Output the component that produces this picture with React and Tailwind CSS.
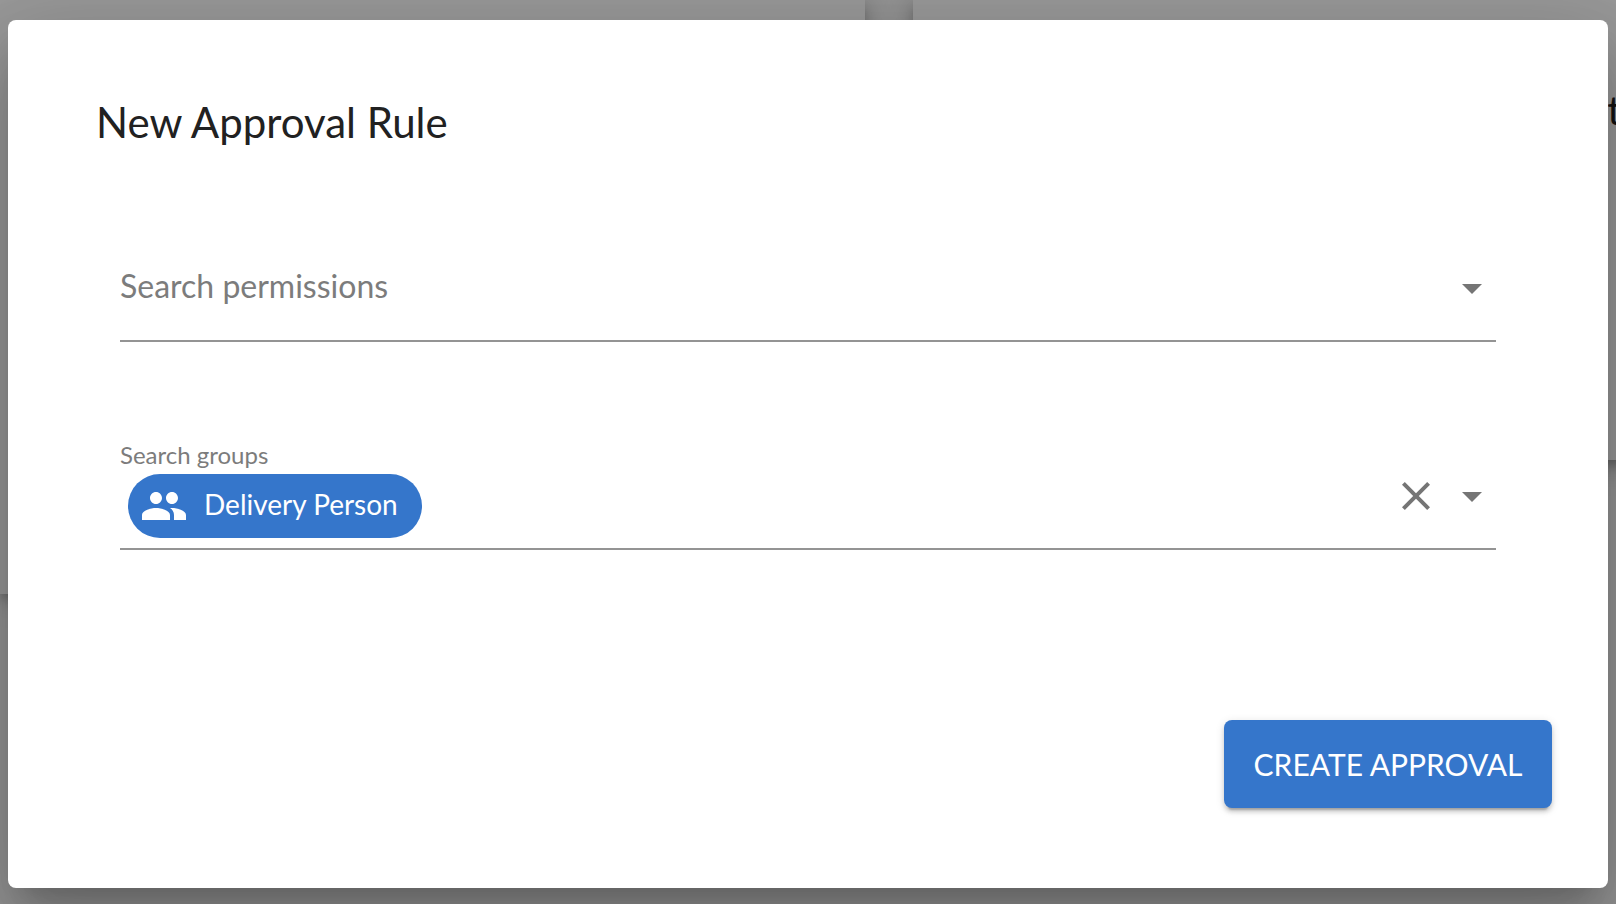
import React from "react";

function PeopleIcon() {
  return (
    <svg viewBox="0 0 24 24" className="size-12 shrink-0" fill="currentColor" aria-hidden="true">
      <path d="M16 11c1.66 0 2.99-1.34 2.99-3S17.66 5 16 5c-1.66 0-3 1.34-3 3s1.34 3 3 3zm-8 0c1.66 0 2.99-1.34 2.99-3S9.66 5 8 5C6.34 5 5 6.34 5 8s1.34 3 3 3zm0 2c-2.33 0-7 1.17-7 3.5V19h14v-2.5c0-2.33-4.67-3.5-7-3.5zm8 0c-.29 0-.62.02-.97.05 1.16.84 1.97 1.97 1.97 3.45V19h6v-2.5c0-2.33-4.67-3.5-7-3.5z" />
    </svg>
  );
}

function CloseIcon() {
  return (
    <svg viewBox="0 0 24 24" className="size-12" fill="currentColor" aria-hidden="true">
      <path d="M19 6.41L17.59 5 12 10.59 6.41 5 5 6.41 10.59 12 5 17.59 6.41 19 12 13.41 17.59 19 19 17.59 13.41 12z" />
    </svg>
  );
}

function ArrowIcon() {
  return (
    <svg viewBox="0 0 24 24" className="size-12" fill="currentColor" aria-hidden="true">
      <path d="M7 10l5 5 5-5z" />
    </svg>
  );
}

function IconButton({ label, children }) {
  return (
    <button type="button" aria-label={label} className="shrink-0 text-[#757575]">
      {children}
    </button>
  );
}

const cardShadow =
  "bg-white shadow-[0_6px_10px_-2px_rgba(0,0,0,0.2),0_4px_28px_0_rgba(0,0,0,0.28)]";

export default function App() {
  return (
    <div className="relative min-h-screen overflow-hidden bg-[#fafafa] font-[Lato,sans-serif] text-[#212121]">
      <div className="absolute inset-0 overflow-hidden" aria-hidden="true">
        <div className="grid w-[110%] grid-cols-2 items-start gap-12">
          <div className={`h-[594px] ${cardShadow}`} />
          <div className={`flex h-[460px] justify-end pt-[86px] pr-[156px] ${cardShadow}`}>
            <span className="text-[40px] leading-[48px]">t</span>
          </div>
        </div>
      </div>

      <div className="relative flex min-h-screen flex-col bg-black/40 px-2 pt-5 pb-4">
        <form
          role="dialog"
          aria-labelledby="dialog-title"
          onSubmit={(e) => e.preventDefault()}
          className="flex grow flex-col rounded-lg bg-white px-14 pt-20 pb-20 shadow-[0_22px_30px_-14px_rgba(0,0,0,0.2),0_48px_76px_6px_rgba(0,0,0,0.14),0_18px_92px_16px_rgba(0,0,0,0.12)]"
        >
          <h1 id="dialog-title" className="px-8 text-[42px] leading-[44px]">
            New Approval Rule
          </h1>

          <div className="flex flex-col px-14 pt-[100px]">
            <div className="flex h-[98px] items-start gap-2 border-b-2 border-[#949494] pt-5">
              <input
                type="text"
                aria-label="Search permissions"
                placeholder="Search permissions"
                className="h-11 min-w-0 grow bg-transparent text-[32px] outline-none placeholder:text-[#7c7c7c] placeholder:opacity-100"
              />
              <IconButton label="Open permissions">
                <ArrowIcon />
              </IconButton>
            </div>

            <div className="mt-[98px] flex h-[110px] items-start gap-2 border-b-2 border-[#949494]">
              <div className="flex min-w-0 grow flex-col gap-1">
                <label htmlFor="groups" className="text-2xl leading-[30px] text-[#7c7c7c]">
                  Search groups
                </label>
                <div className="flex pl-2">
                  <span className="flex h-16 shrink-0 items-center gap-4 rounded-full bg-[#3576cb] pr-6 pl-3 text-white">
                    <PeopleIcon />
                    <span className="pb-1 text-[28px] leading-8">Delivery Person</span>
                  </span>
                  <input id="groups" type="text" className="h-16 min-w-0 grow bg-transparent pl-2 text-[28px] outline-none" />
                </div>
              </div>
              <div className="flex gap-2 pt-8">
                <IconButton label="Clear groups">
                  <CloseIcon />
                </IconButton>
                <IconButton label="Open groups">
                  <ArrowIcon />
                </IconButton>
              </div>
            </div>
          </div>

          <div className="mt-auto flex justify-end">
            <button
              type="submit"
              className="h-[88px] w-[328px] rounded-lg bg-[#3576cb] text-[30px] leading-8 text-white uppercase shadow-[0_6px_2px_-4px_rgba(0,0,0,0.2),0_4px_4px_0_rgba(0,0,0,0.14),0_2px_10px_0_rgba(0,0,0,0.12)]"
            >
              Create approval
            </button>
          </div>
        </form>
      </div>
    </div>
  );
}
